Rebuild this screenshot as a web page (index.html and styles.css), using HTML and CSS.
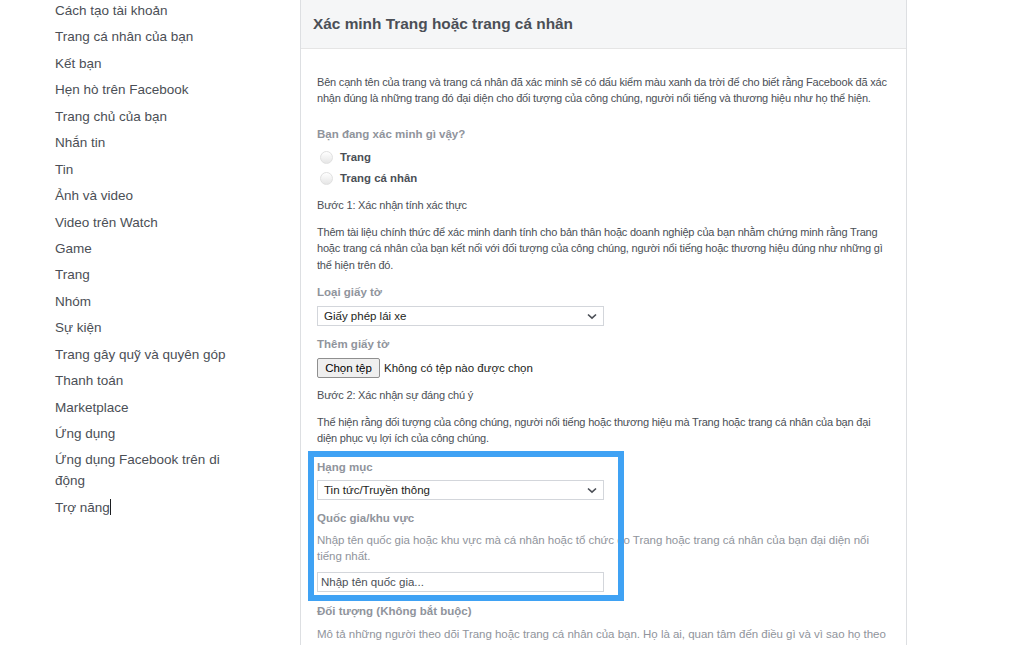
FILE: index.html
```html
<!DOCTYPE html>
<html lang="vi">
<head>
<meta charset="utf-8">
<title>Xác minh Trang hoặc trang cá nhân</title>
<link rel="stylesheet" href="styles.css">
</head>
<body>
<div class="page">
  <nav class="sidebar">
    <ul class="menu">
      <li>Cách tạo tài khoản</li>
      <li>Trang cá nhân của bạn</li>
      <li>Kết bạn</li>
      <li>Hẹn hò trên Facebook</li>
      <li>Trang chủ của bạn</li>
      <li>Nhắn tin</li>
      <li>Tin</li>
      <li>Ảnh và video</li>
      <li>Video trên Watch</li>
      <li>Game</li>
      <li>Trang</li>
      <li>Nhóm</li>
      <li>Sự kiện</li>
      <li>Trang gây quỹ và quyên góp</li>
      <li>Thanh toán</li>
      <li>Marketplace</li>
      <li>Ứng dụng</li>
      <li>Ứng dụng Facebook trên di động</li>
      <li>Trợ năng<span class="caret"></span></li>
    </ul>
  </nav>
  <main class="panel">
    <header class="panel-head">
      <h1 class="title">Xác minh Trang hoặc trang cá nhân</h1>
    </header>
    <div class="panel-body">
      <p class="text">Bên cạnh tên của trang và trang cá nhân đã xác minh sẽ có dấu kiểm màu xanh da trời để cho biết rằng Facebook đã xác nhận đúng là những trang đó đại diện cho đối tượng của công chúng, người nổi tiếng và thương hiệu như họ thể hiện.</p>

      <div class="label l-first">Bạn đang xác minh gì vậy?</div>
      <div class="radios">
        <label class="radio"><span class="dot"></span>Trang</label>
        <label class="radio"><span class="dot"></span>Trang cá nhân</label>
      </div>

      <div class="step">Bước 1: Xác nhận tính xác thực</div>
      <p class="text t-step">Thêm tài liệu chính thức để xác minh danh tính cho bản thân hoặc doanh nghiệp của bạn nhằm chứng minh rằng Trang hoặc trang cá nhân của bạn kết nối với đối tượng của công chúng, người nổi tiếng hoặc thương hiệu đúng như những gì thể hiện trên đó.</p>

      <div class="label">Loại giấy tờ</div>
      <div class="select">
        <span>Giấy phép lái xe</span>
        <svg class="chev" width="10" height="7" viewBox="0 0 10 7"><path d="M1 1.5 L5 5.2 L9 1.5" fill="none" stroke="#4b4f56" stroke-width="1.6"/></svg>
      </div>

      <div class="label">Thêm giấy tờ</div>
      <div class="file">
        <span class="file-btn">Chọn tệp</span>
        <span class="file-name">Không có tệp nào được chọn</span>
      </div>

      <div class="step s2">Bước 2: Xác nhận sự đáng chú ý</div>
      <p class="text t-step">Thể hiện rằng đối tượng của công chúng, người nổi tiếng hoặc thương hiệu mà Trang hoặc trang cá nhân của bạn đại diện phục vụ lợi ích của công chúng.</p>

      <div class="highlight">
        <div class="label l-hl">Hạng mục</div>
        <div class="select">
          <span>Tin tức/Truyền thông</span>
          <svg class="chev" width="10" height="7" viewBox="0 0 10 7"><path d="M1 1.5 L5 5.2 L9 1.5" fill="none" stroke="#4b4f56" stroke-width="1.6"/></svg>
        </div>
        <div class="label">Quốc gia/khu vực</div>
        <p class="hint">Nhập tên quốc gia hoặc khu vực mà cá nhân hoặc tổ chức do Trang hoặc trang cá nhân của bạn đại diện nổi tiếng nhất.</p>
        <input class="field" type="text" placeholder="Nhập tên quốc gia...">
        <span class="frame"></span>
      </div>

      <div class="label l-after">Đối tượng (Không bắt buộc)</div>
      <p class="hint h-last">Mô tả những người theo dõi Trang hoặc trang cá nhân của bạn. Họ là ai, quan tâm đến điều gì và vì sao họ theo dõi Trang hoặc trang cá nhân của bạn.</p>
    </div>
  </main>
</div>
</body>
</html>
```
FILE: styles.css
```css
* { box-sizing: border-box; }
html, body {
  margin: 0;
  padding: 0;
  background: #ffffff;
  height: 645px;
  overflow: hidden;
}
body {
  font-family: "Liberation Sans", Arial, sans-serif;
  color: #4b4f56;
}
.page {
  display: flex;
  align-items: flex-start;
}
.sidebar {
  width: 300px;
  flex: none;
  padding-left: 55px;
}
.menu {
  list-style: none;
  margin: 0;
  padding: 0;
  width: 190px;
}
.menu li {
  font-size: 13.5px;
  line-height: 21px;
  margin-bottom: 5.44px;
  color: #4b4f56;
}
.caret {
  display: inline-block;
  width: 1px;
  height: 16px;
  background: #1c1e21;
  vertical-align: -3px;
}
.panel {
  width: 607px;
  flex: none;
  border-left: 1px solid #dddfe2;
  border-right: 1px solid #dddfe2;
  min-height: 645px;
}
.panel-head {
  height: 49px;
  background: #f5f6f7;
  border-bottom: 1px solid #e5e5e5;
  padding-left: 12px;
}
.title {
  margin: 0;
  font-size: 15.4px;
  font-weight: bold;
  line-height: 48px;
  color: #4b4f56;
}
.panel-body {
  padding: 24.75px 16px 0 16px;
  display: flex;
  flex-direction: column;
  align-items: flex-start;
}
.text {
  margin: 0;
  font-size: 11px;
  letter-spacing: -0.2px;
  line-height: 16.5px;
  color: #4b4f56;
}
.label {
  font-size: 11.5px;
  font-weight: bold;
  line-height: 16.5px;
  color: #90949c;
  margin-top: 9.75px;
  margin-bottom: 5.75px;
}
.l-first { margin-top: 19px; margin-bottom: 4.25px; }
.radios {
  display: flex;
  flex-direction: column;
}
.radio {
  display: flex;
  align-items: center;
  height: 21px;
  font-size: 11.4px;
  font-weight: bold;
  color: #4b4f56;
}
.dot {
  width: 13px;
  height: 13px;
  border-radius: 50%;
  border: 1px solid #e0e0e0;
  background: linear-gradient(#ffffff, #e6e6e6);
  margin-left: 3px;
  margin-right: 7px;
}
.step {
  font-size: 11px;
  letter-spacing: -0.2px;
  line-height: 16.5px;
  color: #4b4f56;
  margin-top: 8.25px;
}
.s2 { margin-top: 8.75px; }
.t-step { margin-top: 10.5px; }
.t-step + .label { margin-top: 10.5px; }
.select {
  width: 287px;
  height: 20px;
  border: 1px solid #d3d6db;
  background: #fff;
  display: flex;
  align-items: center;
  justify-content: space-between;
  padding: 0 6px 0 6px;
  font-size: 11.5px;
  color: #1c1e21;
}
.file {
  display: flex;
  align-items: center;
  height: 20px;
  font-size: 11.5px;
  color: #1c1e21;
}
.file-btn {
  width: 63px;
  height: 20px;
  border: 1px solid #8f8f8f;
  border-radius: 2px;
  background: #efefef;
  display: flex;
  align-items: center;
  justify-content: center;
  color: #000;
}
.file-name { margin-left: 4px; }
.highlight {
  position: relative;
  display: flex;
  flex-direction: column;
  align-items: flex-start;
}
.l-hl { margin-top: 12px; margin-bottom: 4.75px; }
.hint {
  margin: 0;
  font-size: 11.5px;
  letter-spacing: -0.03px;
  line-height: 16.5px;
  color: #90949c;
}
.highlight .hint { margin-top: -0.25px; margin-bottom: 7.25px; }
.field {
  width: 287px;
  height: 20px;
  border: 1px solid #d3d6db;
  padding: 0 3px;
  margin: 0;
  font-family: "Liberation Sans", Arial, sans-serif;
  font-size: 11.5px;
  color: #4b4f56;
  outline: none;
}
.field::placeholder { color: #4b4f56; }
.frame {
  position: absolute;
  left: -9px;
  top: 4.25px;
  width: 316px;
  bottom: -9px;
  border: 6px solid #3fa2f4;
  pointer-events: none;
}
.l-after { margin-top: 10.75px; margin-bottom: 6.5px; }
```
